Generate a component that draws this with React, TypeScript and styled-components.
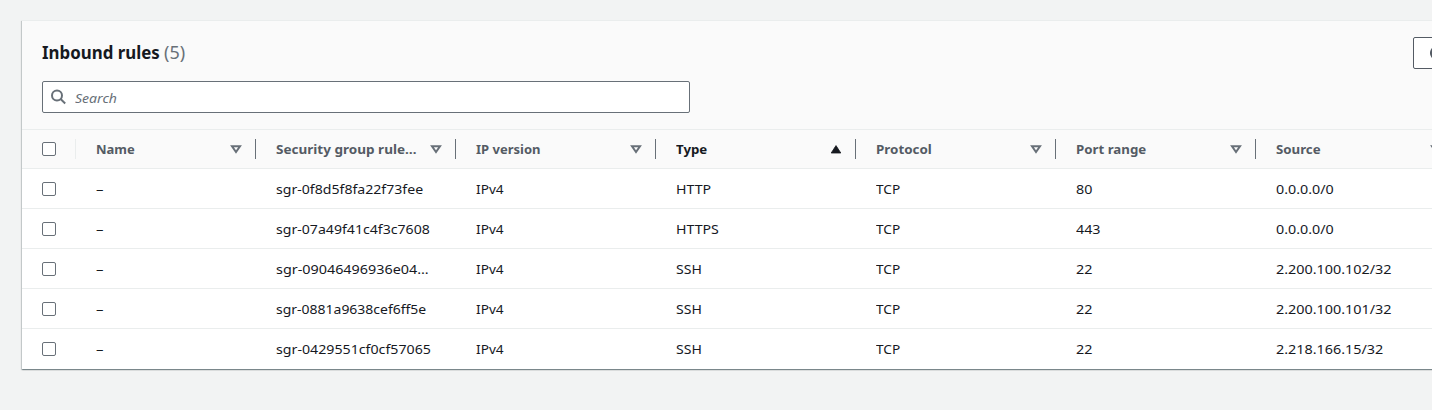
import React from "react";
import styled, { createGlobalStyle } from "styled-components";

const GlobalStyle = createGlobalStyle`
  *, *::before, *::after { box-sizing: border-box; }
  html, body { margin: 0; height: 100%; overflow: hidden; }
  body {
    background: #f2f3f3;
    color: #16191f;
    font-family: "Noto Sans", "Open Sans", sans-serif;
    font-size: 13px;
    line-height: 20px;
  }
`;

const Page = styled.main`
  padding: 20px 0 0 22px;
  height: 410px;
  overflow: hidden;
`;

const Panel = styled.section`
  width: 1461px;
  background: #fff;
  border-top: 1px solid #eaeded;
  box-shadow: 0 1px 1px 0 rgba(0, 28, 36, 0.3), 1px 1px 1px 0 rgba(0, 28, 36, 0.15),
    -1px 1px 1px 0 rgba(0, 28, 36, 0.15);
`;

const PanelHeader = styled.header`
  height: 108px;
  padding: 16px 20px 0;
  background: #fafafa;
`;

const TitleBar = styled.div`
  display: flex;
  justify-content: space-between;
  align-items: center;
  height: 32px;
`;

const Title = styled.h2`
  display: flex;
  margin: 0;
  padding-bottom: 2px;
  font-size: 18px;
  line-height: 22px;
  font-weight: 700;
`;

const Label = styled.span<{ $stretch?: number }>`
  display: inline-block;
  transform: scaleX(${(p) => p.$stretch ?? 1});
  transform-origin: 0 50%;
  white-space: nowrap;
`;

const TitleText = styled(Label)`
  width: 122px;
`;

const Count = styled.span`
  color: #687078;
  font-weight: 400;
`;

const RefreshButton = styled.button`
  display: flex;
  align-items: center;
  justify-content: center;
  width: 50px;
  height: 32px;
  padding: 0;
  color: #545b64;
  background: #fff;
  border: 1px solid #545b64;
  border-radius: 2px;
`;

const SearchBox = styled.label`
  display: flex;
  align-items: center;
  gap: 8px;
  width: 648px;
  height: 32px;
  margin-top: 12px;
  padding: 0 8px;
  background: #fff;
  border: 1px solid #687078;
  border-radius: 2px;
  color: #687078;
`;

const SearchInput = styled.input`
  width: 550px;
  padding: 2px 0 0;
  border: 0;
  outline: 0;
  background: transparent;
  font: inherit;
  transform: scaleX(1.08);
  transform-origin: 0 50%;
  &::placeholder {
    color: #687078;
    opacity: 1;
    font-style: italic;
  }
`;

const Row = styled.div<{ $head?: boolean }>`
  display: grid;
  grid-template-columns: 54px 180px repeat(6, 200px);
  align-items: center;
  height: 40px;
  overflow: hidden;
  background: ${(p) => (p.$head ? "#fafafa" : "#fff")};
  border-top: ${(p) => (p.$head ? "1px solid #eaeded" : "0")};
  border-bottom: 1px solid #eaeded;
  &:last-child { border-bottom-color: transparent; }
`;

const CheckCell = styled.div<{ $head?: boolean }>`
  display: flex;
  align-items: center;
  height: 20px;
  padding-left: 20px;
  border-right: 1px solid ${(p) => (p.$head ? "#eaeded" : "transparent")};
`;

const Checkbox = styled.input`
  appearance: none;
  width: 14px;
  height: 14px;
  margin: 0;
  background: #fff;
  border: 1px solid #687078;
  border-radius: 2px;
`;

const HeadCell = styled.div<{ $sorted?: boolean }>`
  display: flex;
  align-items: center;
  justify-content: space-between;
  height: 20px;
  padding: 0 14px 0 20px;
  border-right: 1px solid #687078;
  color: ${(p) => (p.$sorted ? "#16191f" : "#545b64")};
  font-weight: 700;
`;

const Cell = styled.div`
  height: 20px;
  padding-left: 20px;
  white-space: nowrap;
`;

const SortIcon = styled.svg<{ $sorted?: boolean }>`
  flex: none;
  width: 10px;
  height: 9px;
  overflow: visible;
  color: ${(p) => (p.$sorted ? "#16191f" : "#687078")};
`;

type Text = [string, number?];

const columns: Text[] = [
  ["Name"],
  ["Security group rule…", 1.04],
  ["IP version"],
  ["Type", 1.02],
  ["Protocol", 1.03],
  ["Port range", 1.02],
  ["Source", 1.02],
];

const http: Text = ["HTTP", 1.09];
const https: Text = ["HTTPS", 1.09];
const ssh: Text = ["SSH", 1.08];
const tcp: Text = ["TCP", 1.05];
const ipv4: Text = ["IPv4", 1.05];
const none: Text = ["–", 1.15];

const rules: Text[][] = [
  [none, ["sgr-0f8d5f8fa22f73fee", 1.085], ipv4, http, tcp, ["80", 1.1], ["0.0.0.0/0", 1.1]],
  [none, ["sgr-07a49f41c4f3c7608", 1.085], ipv4, https, tcp, ["443", 1.1], ["0.0.0.0/0", 1.1]],
  [none, ["sgr-09046496936e04…", 1.105], ipv4, ssh, tcp, ["22", 1.1], ["2.200.100.102/32", 1.105]],
  [none, ["sgr-0881a9638cef6ff5e", 1.075], ipv4, ssh, tcp, ["22", 1.1], ["2.200.100.101/32", 1.105]],
  [none, ["sgr-0429551cf0cf57065", 1.092], ipv4, ssh, tcp, ["22", 1.1], ["2.218.166.15/32", 1.105]],
];

function Sort({ sorted }: { sorted: boolean }) {
  return (
    <SortIcon viewBox="0 0 10 9" $sorted={sorted}>
      {sorted ? (
        <path d="M5 0.6 L9.8 8 H0.2 Z" fill="currentColor" stroke="currentColor" strokeLinejoin="round" strokeWidth="0.8" />
      ) : (
        <path d="M1 1.3 H9 L5 7.1 Z" fill="none" stroke="currentColor" strokeWidth="2" />
      )}
    </SortIcon>
  );
}

export default function App() {
  return (
    <>
      <GlobalStyle />
      <Page>
        <Panel>
          <PanelHeader>
            <TitleBar>
              <Title>
                <TitleText $stretch={0.937}>Inbound rules</TitleText>
                <Count>(5)</Count>
              </Title>
              <RefreshButton aria-label="Refresh">
                <svg width="16" height="16" viewBox="0 0 16 16" fill="none" stroke="currentColor" strokeWidth="2">
                  <path d="M14 8a6 6 0 1 1-2-4.5L14 5.5M14 1v5H9" transform="translate(-1 0)" />
                </svg>
              </RefreshButton>
            </TitleBar>
            <SearchBox>
              <svg width="16" height="16" viewBox="0 0 16 16" fill="none" stroke="currentColor" strokeWidth="2">
                <circle cx="6" cy="6.5" r="5" />
                <path d="M9.6 10.1 L14.2 14.4" />
              </svg>
              <SearchInput placeholder="Search" />
            </SearchBox>
          </PanelHeader>
          <div>
            <Row $head>
              <CheckCell $head>
                <Checkbox type="checkbox" />
              </CheckCell>
              {columns.map(([text, stretch]) => (
                <HeadCell key={text} $sorted={text === "Type"}>
                  <Label $stretch={stretch}>{text}</Label>
                  <Sort sorted={text === "Type"} />
                </HeadCell>
              ))}
            </Row>
            {rules.map((rule, i) => (
              <Row key={i}>
                <CheckCell>
                  <Checkbox type="checkbox" />
                </CheckCell>
                {rule.map(([text, stretch], j) => (
                  <Cell key={j}>
                    <Label $stretch={stretch}>{text}</Label>
                  </Cell>
                ))}
              </Row>
            ))}
          </div>
        </Panel>
      </Page>
    </>
  );
}
